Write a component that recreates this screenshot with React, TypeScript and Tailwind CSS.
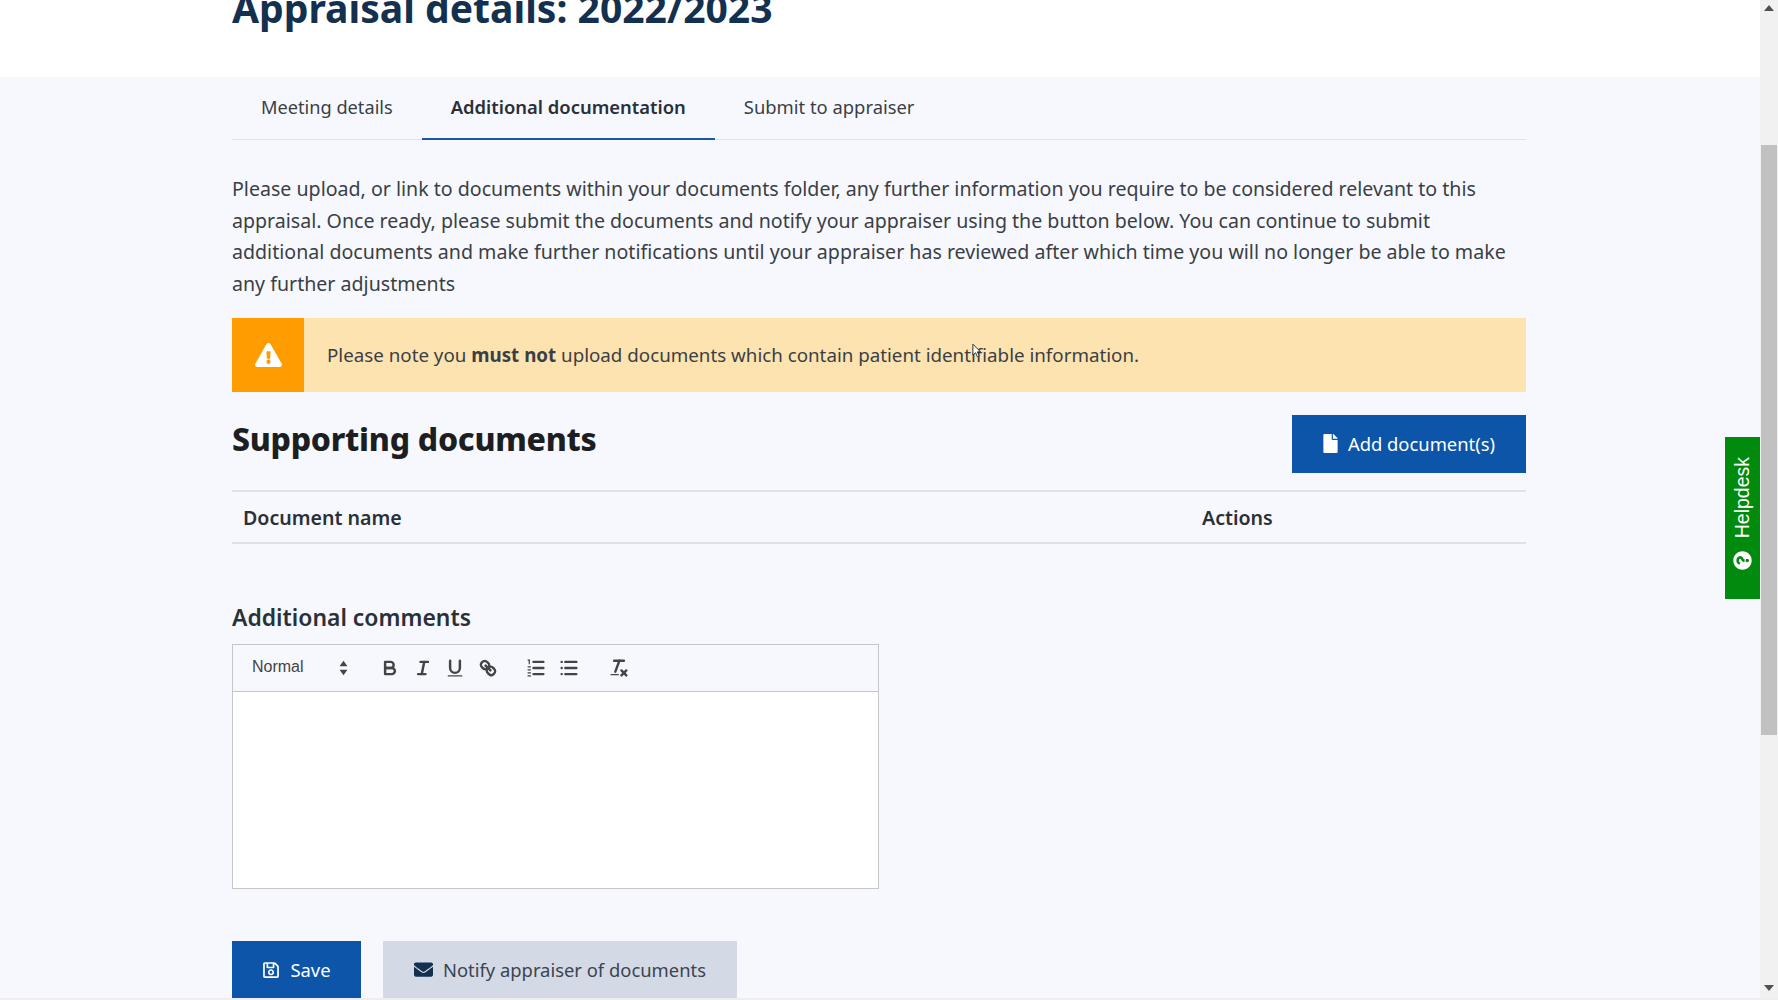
import { FaExclamationTriangle, FaFile, FaEnvelope, FaRegSave, FaQuestionCircle } from 'react-icons/fa';

const font = { fontFamily: '"Noto Sans", sans-serif' };

function ToolIcon({ children }: { children: React.ReactNode }) {
  return (
    <button className="w-[32.5px] h-[24px] flex items-center justify-center text-[#444]">
      <svg viewBox="0 0 18 18" className="w-[22px] h-[22px]" fill="none" stroke="currentColor" strokeWidth="2" strokeLinecap="round" strokeLinejoin="round">
        {children}
      </svg>
    </button>
  );
}

function Toolbar() {
  return (
    <div className="h-[47px] flex items-center pl-[13px] border-b-[1.5px] border-[#c4c6cc] bg-[#f7f8fd]">
      <div className="w-[114px] flex items-center justify-between pl-[6px] pr-[12px] mr-[14px] text-[16px] text-[#444] -mt-[2px]" style={{ fontFamily: '"Liberation Sans", sans-serif' }}>
        <span>Normal</span>
        <svg viewBox="0 0 8 14" className="w-[9px] h-[16px] mt-[2px]" fill="currentColor">
          <path d="M4 0.5 L7.5 5.5 H0.5 Z" />
          <path d="M4 13.5 L7.5 8.5 H0.5 Z" />
        </svg>
      </div>
      <div className="flex mr-[16px]">
        <ToolIcon>
          <path d="M5,4H9.5A2.5,2.5,0,0,1,12,6.5v0A2.5,2.5,0,0,1,9.5,9H5V4Z" />
          <path d="M5,9h5.5A2.5,2.5,0,0,1,13,11.5v0A2.5,2.5,0,0,1,10.5,14H5V9Z" />
        </ToolIcon>
        <ToolIcon>
          <line x1="7" x2="13" y1="4" y2="4" />
          <line x1="5" x2="11" y1="14" y2="14" />
          <line x1="8" x2="10" y1="14" y2="4" />
        </ToolIcon>
        <ToolIcon>
          <path d="M5,3V9a4,4,0,0,0,4,4H9a4,4,0,0,0,4-4V3" />
          <rect x="3" y="15" width="12" height="1" rx="0.5" fill="currentColor" stroke="none" />
        </ToolIcon>
        <ToolIcon>
          <line x1="7" x2="11" y1="7" y2="11" />
          <path d="M8.9,4.577a3.476,3.476,0,0,1,.36,4.679A3.476,3.476,0,0,1,4.577,8.9C3.185,7.5,2.035,6.4,4.217,4.217S7.5,3.185,8.9,4.577Z" />
          <path d="M13.423,9.1a3.476,3.476,0,0,0-4.679-.36,3.476,3.476,0,0,0,.36,4.679c1.392,1.392,2.5,2.542,4.679.36S14.815,10.5,13.423,9.1Z" />
        </ToolIcon>
      </div>
      <div className="flex mr-[18px]">
        <ToolIcon>
          <line x1="7" x2="15" y1="4" y2="4" />
          <line x1="7" x2="15" y1="9" y2="9" />
          <line x1="7" x2="15" y1="14" y2="14" />
          <line x1="2.5" x2="3.5" y1="2.5" y2="2.5" strokeWidth="1" />
          <line x1="3.5" x2="3.5" y1="2.5" y2="5.5" strokeWidth="1" />
          <line x1="2.5" x2="4.5" y1="8" y2="8" strokeWidth="1" />
          <line x1="2.5" x2="4.5" y1="10.5" y2="10.5" strokeWidth="1" />
          <line x1="2.5" x2="4.5" y1="13" y2="13" strokeWidth="1" />
          <line x1="2.5" x2="4.5" y1="15.5" y2="15.5" strokeWidth="1" />
        </ToolIcon>
        <ToolIcon>
          <line x1="6" x2="15" y1="4" y2="4" />
          <line x1="6" x2="15" y1="9" y2="9" />
          <line x1="6" x2="15" y1="14" y2="14" />
          <line x1="3" x2="3" y1="4" y2="4" />
          <line x1="3" x2="3" y1="9" y2="9" />
          <line x1="3" x2="3" y1="14" y2="14" />
        </ToolIcon>
      </div>
      <ToolIcon>
        <line x1="5" x2="13" y1="3" y2="3" />
        <line x1="6" x2="9.35" y1="12" y2="3" />
        <line x1="11" x2="15" y1="11" y2="15" />
        <line x1="15" x2="11" y1="11" y2="15" />
        <rect x="2" y="14" width="7" height="1" rx="0.5" fill="currentColor" stroke="none" />
      </ToolIcon>
    </div>
  );
}

export default function App() {
  return (
    <div className="relative w-full h-screen overflow-hidden flex bg-[#f7f8fd]" style={font}>
      <div className="flex-1 min-w-0 flex flex-col">
        <header className="h-[77px] shrink-0 bg-white pl-[232px] flex items-end overflow-hidden">
          <h1 className="text-[39.1px] leading-[54px] font-bold text-[#14304f] mb-[42px] whitespace-nowrap">
            Appraisal details: 2022/2023
          </h1>
        </header>

        <main className="flex-1 min-h-0 overflow-hidden pl-[232px]">
          <div className="w-[1294px]">
            <nav className="h-[63px] flex border-b border-[#e0e2e8] text-[18.4px] text-[#3a3f45]">
              <a className="px-[29px] h-full flex items-center text-[18.2px]">Meeting details</a>
              <a className="px-[29px] pb-[2px] h-[63px] flex items-center font-semibold text-[#2a3038] border-b-2 border-[#1b57a8]">
                Additional documentation
              </a>
              <a className="px-[29px] pb-[2px] h-full flex items-center">Submit to appraiser</a>
            </nav>

            <p className="mt-[33px] text-[19.6px] leading-[31.7px] text-[#3a3f45]">
              Please upload, or link to documents within your documents folder, any further information you require to be considered relevant to this appraisal. Once ready, please submit the documents and notify your appraiser using the button below. You can continue to submit additional documents and make further notifications until your appraiser has reviewed after which time you will no longer be able to make any further adjustments
            </p>

            <div className="mt-[18px] h-[74px] flex bg-[#fde3b0]">
              <div className="w-[72px] bg-[#ff9d00] flex items-center justify-center text-white">
                <FaExclamationTriangle className="w-[27px] h-[24px]" />
              </div>
              <div className="pl-[23px] flex items-center text-[18.75px] text-[#3a3f45]">
                <span>Please note you <strong className="font-bold">must not</strong> upload documents which contain patient identifiable information.</span>
              </div>
            </div>

            <div className="mt-[23px] h-[77px] flex items-start justify-between border-b-2 border-[#e0e2e8]">
              <h2 className="text-[32px] leading-[48px] font-extrabold text-[#1c1e21] tracking-[-0.26px]">Supporting documents</h2>
              <button className="w-[234px] h-[58px] bg-[#0c55a8] text-white text-[18.4px] flex items-center justify-center gap-[10px]">
                <FaFile className="w-[15px] h-[19px]" />
                Add document(s)
              </button>
            </div>

            <div className="h-[52px] pt-[1px] flex items-center border-b-2 border-[#dfe1e8] text-[19.6px] font-semibold text-[#2a3038]">
              <div className="pl-[11px] w-[970px]">Document name</div>
              <div>Actions</div>
            </div>

            <h3 className="mt-[56px] text-[22.9px] leading-[36px] font-semibold text-[#2a3038]">Additional comments</h3>

            <div className="mt-[8px] w-[647px] h-[245px] border-[1.5px] border-[#c4c6cc] bg-white">
              <Toolbar />
            </div>

            <div className="mt-[52px] flex gap-[22px]">
              <button className="w-[129px] h-[60px] pb-[2px] bg-[#0c55a8] text-white text-[18.4px] flex items-center justify-center gap-[10px]">
                <FaRegSave className="w-[18px] h-[18px]" />
                Save
              </button>
              <button className="w-[354px] h-[60px] pb-[2px] bg-[#d3dae6] text-[#3c4450] text-[18.4px] flex items-center justify-center gap-[10px]">
                <FaEnvelope className="w-[19px] h-[19px] text-[#14304f]" />
                Notify appraiser of documents
              </button>
            </div>
          </div>
        </main>
      </div>

      <aside className="w-[18px] shrink-0 bg-[#f1f1f1] flex flex-col items-center">
        <svg viewBox="0 0 10 6" className="w-[10px] h-[6px] mt-[5px] shrink-0" fill="#505050">
          <path d="M5 0 L10 6 H0 Z" />
        </svg>
        <div className="mt-[134px] w-[16px] h-[590px] shrink-0 bg-[#c1c1c1]" />
        <svg viewBox="0 0 10 6" className="w-[10px] h-[6px] mt-[250px] shrink-0" fill="#505050">
          <path d="M5 6 L10 0 H0 Z" />
        </svg>
      </aside>

      <div className="absolute left-0 right-0 bottom-0 h-[2px] bg-[#eeeeee]" />

      <a className="absolute left-[1725px] top-[437px] w-[35px] h-[162px] bg-[#008a0e] text-white flex flex-col items-center justify-center gap-[13px] pb-[9px]">
        <span className="[writing-mode:vertical-rl] rotate-180 text-[19.5px] leading-none" style={{ fontFamily: '"Liberation Sans", sans-serif' }}>Helpdesk</span>
        <FaQuestionCircle className="w-[19px] h-[19px] -rotate-90 -ml-[1px]" />
      </a>

      <svg viewBox="0 0 10 16" className="absolute left-[972px] top-[343px] w-[9px] h-[15px]" fill="#fff" stroke="#222" strokeWidth="1">
        <path d="M1 1 L1 13 L4 10.5 L6 15 L8 14 L6 9.5 L9.5 9.5 Z" />
      </svg>
    </div>
  );
}
